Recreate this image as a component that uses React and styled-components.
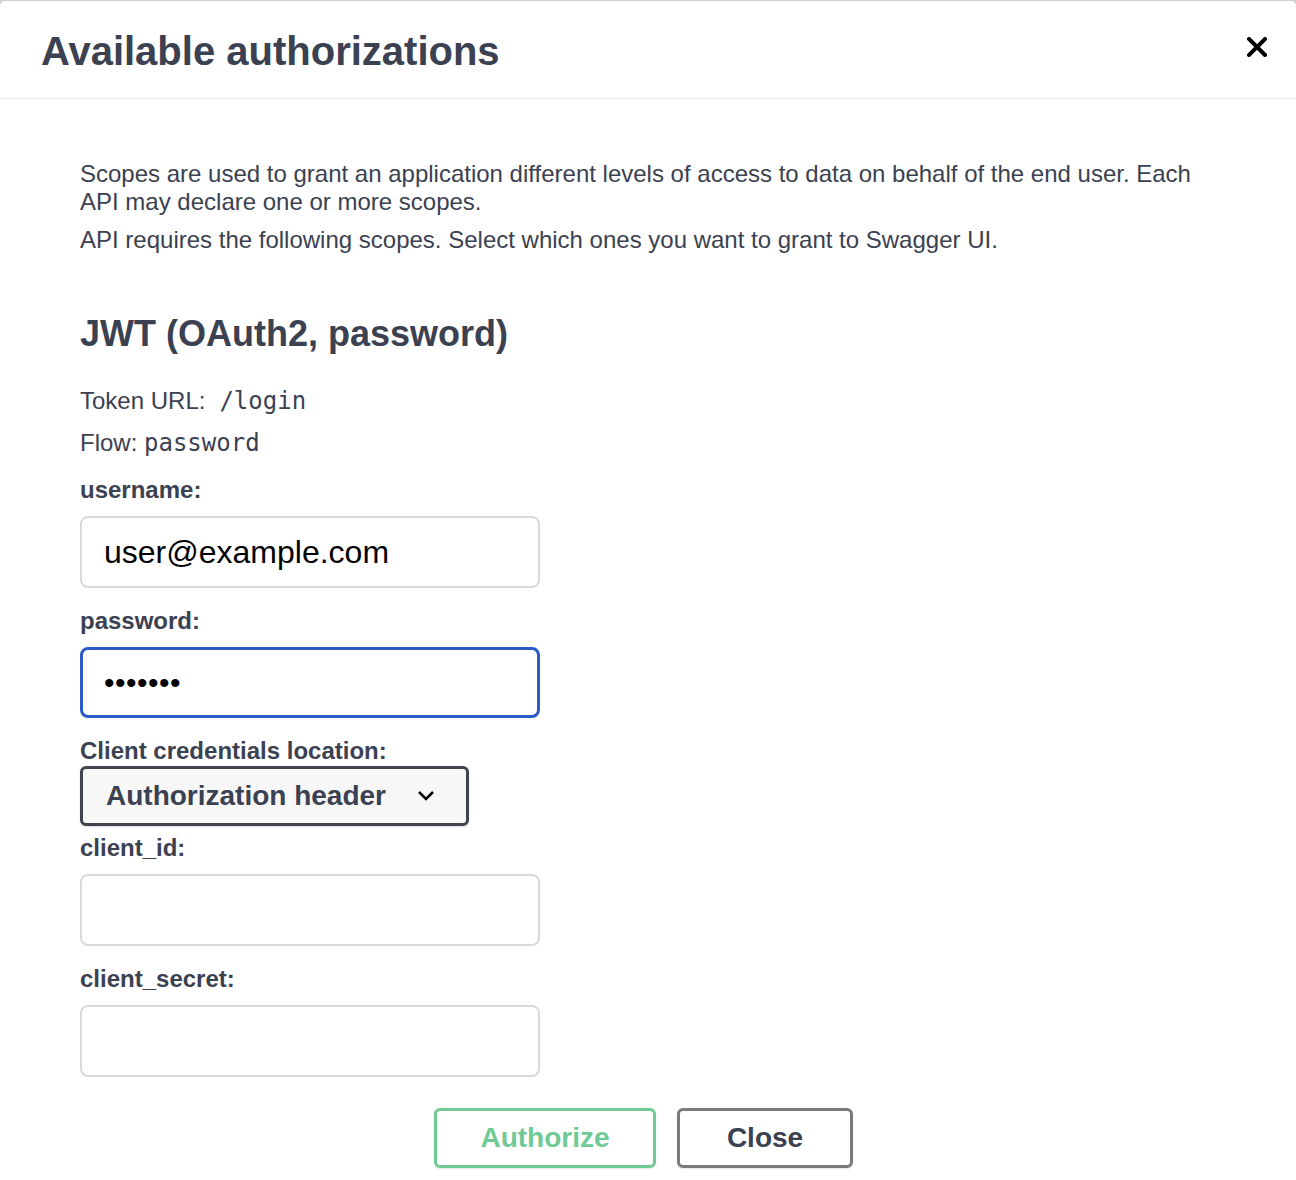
import styled, { createGlobalStyle } from "styled-components";

const Global = createGlobalStyle`
  html, body {
    margin: 0;
    padding: 0;
    background: #cfcfcf;
  }
  body {
    font-family: "Liberation Sans", Arial, sans-serif;
  }
`;

const Modal = styled.div`
  background: #fff;
  width: 1296px;
  min-height: 1179px;
  margin-top: 1px;
  border-radius: 5px 5px 0 0;
  color: #3b4151;
  overflow: hidden;
`;

const Header = styled.div`
  height: 98px;
  border-bottom: 1px solid #ebebeb;
  display: flex;
  align-items: center;
  justify-content: space-between;
  padding: 0 28px 0 41px;
  box-sizing: border-box;
`;

const Title = styled.h3`
  margin: 3px 0 0;
  font-size: 40px;
  font-weight: 700;
  color: #3b4151;
`;

const CloseIcon = styled.button`
  border: none;
  background: none;
  padding: 0;
  width: 22px;
  height: 22px;
  display: flex;
  align-items: center;
  justify-content: center;
  margin-bottom: 6px;
`;

const Body = styled.div`
  display: flex;
  flex-direction: column;
  align-items: flex-start;
  padding: 61px 80px 0;
`;

const Note = styled.p`
  margin: 0 0 10px;
  font-size: 24px;
  line-height: 28px;
  max-width: 1120px;
`;

const SchemeTitle = styled.h4`
  margin: 49px 0 33px;
  font-size: 36px;
  line-height: 41px;
  font-weight: 700;
`;

const Info = styled.p`
  margin: 0 0 14px;
  font-size: 24px;
  line-height: 28px;
`;

const Code = styled.code`
  font-family: "DejaVu Sans Mono", "Liberation Mono", monospace;
  font-size: 24px;
  margin-left: ${(p) => p.$gap || 0}px;
`;

const Label = styled.label`
  display: block;
  font-size: 24px;
  font-weight: 700;
  line-height: 28px;
  margin: ${(p) => (p.$first ? 5 : 0)}px 0 ${(p) => (p.$tight ? 1 : 12)}px;
`;

const Input = styled.input`
  display: block;
  box-sizing: border-box;
  width: 460px;
  height: ${(p) => (p.$focus ? 71 : 72)}px;
  border-style: solid;
  border-color: ${(p) => (p.$focus ? "#2a5bc7" : "#d9d9d9")};
  border-width: ${(p) => (p.$focus ? 3 : 2)}px;
  border-radius: 8px;
  padding: 0 ${(p) => (p.$focus ? 21 : 22)}px;
  font-family: "Liberation Sans", Arial, sans-serif;
  font-size: ${(p) => (p.$dots ? 30 : 32)}px;
  color: #000;
  margin-bottom: 19px;
  outline: none;
  background: #fff;
  letter-spacing: ${(p) => (p.$dots ? "0.5px" : "0")};
`;

const Select = styled.div`
  box-sizing: border-box;
  width: 389px;
  height: 60px;
  border: 3px solid #41444e;
  border-radius: 6px;
  background: #f7f7f7;
  display: flex;
  align-items: center;
  justify-content: space-between;
  padding: 0 30px 0 23px;
  font-size: 28px;
  font-weight: 700;
  color: #3b4151;
  box-shadow: 0 1px 2px rgba(0, 0, 0, 0.15);
  margin-bottom: 8px;
`;

const Buttons = styled.div`
  align-self: stretch;
  display: flex;
  justify-content: center;
  gap: 21px;
  padding: 12px 0 0 0;
  margin-right: 9px;
`;

const Btn = styled.button`
  box-sizing: border-box;
  height: 60px;
  width: ${(p) => p.$w}px;
  border: 3px solid ${(p) => p.$border};
  border-radius: 6px;
  background: #fff;
  color: ${(p) => p.$color};
  font-family: "Liberation Sans", Arial, sans-serif;
  font-size: 28px;
  font-weight: 700;
  box-shadow: 0 1px 2px rgba(0, 0, 0, 0.1);
`;

export default function App() {
  return (
    <>
      <Global />
      <Modal>
        <Header>
          <Title>Available authorizations</Title>
          <CloseIcon aria-label="close">
            <svg width="20" height="20" viewBox="0 0 20 20">
              <path
                d="M2 2 L18 18 M18 2 L2 18"
                stroke="#000"
                strokeWidth="4"
                strokeLinecap="square"
              />
            </svg>
          </CloseIcon>
        </Header>
        <Body>
          <Note>
            Scopes are used to grant an application different levels of access
            to data on behalf of the end user. Each API may declare one or more
            scopes.
          </Note>
          <Note>
            API requires the following scopes. Select which ones you want to
            grant to Swagger UI.
          </Note>
          <SchemeTitle>JWT (OAuth2, password)</SchemeTitle>
          <Info>
            Token URL:<Code $gap={14}>/login</Code>
          </Info>
          <Info>
            Flow: <Code>password</Code>
          </Info>
          <Label $first>username:</Label>
          <Input defaultValue="user@example.com" />
          <Label>password:</Label>
          <Input $focus $dots type="password" defaultValue="secret1" />
          <Label $tight>Client credentials location:</Label>
          <Select>
            Authorization header
            <svg width="20" height="12" viewBox="0 0 20 12">
              <path
                d="M3 2 L10 9 L17 2"
                fill="none"
                stroke="#000"
                strokeWidth="2.5"
              />
            </svg>
          </Select>
          <Label>client_id:</Label>
          <Input />
          <Label>client_secret:</Label>
          <Input />
          <Buttons>
            <Btn $w={222} $border="#6fca95" $color="#6fca95">
              Authorize
            </Btn>
            <Btn $w={176} $border="#7a7a7a" $color="#3b4151">
              Close
            </Btn>
          </Buttons>
        </Body>
      </Modal>
    </>
  );
}
